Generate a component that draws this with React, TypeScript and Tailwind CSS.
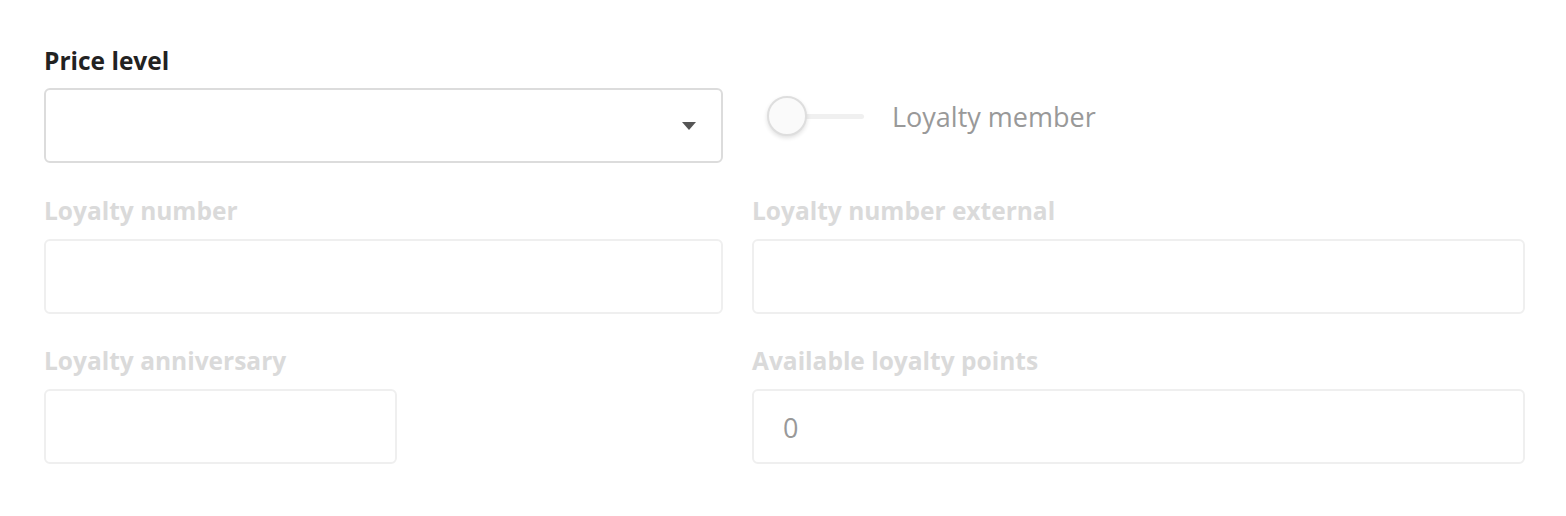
import { ReactNode } from "react";

const font = { fontFamily: "'Open Sans', 'Noto Sans', sans-serif" };

function Label({ children, disabled = false }: { children: ReactNode; disabled?: boolean }) {
  return (
    <div
      className={
        "text-[24.5px] leading-[32px] font-bold " + (disabled ? "text-[#dadada]" : "text-[#222]")
      }
    >
      {children}
    </div>
  );
}

function TextBox({ value, widthClass }: { value?: string; widthClass: string }) {
  return (
    <div
      className={
        "mt-[12px] h-[75px] rounded-[6px] border-2 border-[#efefef] bg-white flex items-center px-[29px] pt-[3px] text-[27px] text-[#999] " +
        widthClass
      }
    >
      {value}
    </div>
  );
}

export default function App() {
  return (
    <div className="w-[1566px] h-[516px] bg-white pl-[44px] pt-[45px]" style={font}>
      {/* row 1 */}
      <div className="flex">
        <div className="w-[679px]">
          <Label>Price level</Label>
          <div className="mt-[11px] h-[75px] rounded-[6px] border-2 border-[#dcdcdc] bg-white flex items-center justify-end pr-[25px]">
            <svg width="14" height="8" viewBox="0 0 14 8">
              <path d="M0 0 L14 0 L7 8 Z" fill="#555" />
            </svg>
          </div>
        </div>
        <div className="ml-[44px] mt-[51px] flex items-center h-[40px]">
          <div className="relative w-[97px] h-[40px] flex items-center">
            <div className="ml-[14px] h-[5px] w-[83px] rounded-full bg-[#f0f0f0]" />
            <div className="absolute left-0 top-0 w-[40px] h-[40px] rounded-full bg-[#fafafa] border-2 border-[#dedede] shadow-[0_2px_4px_rgba(0,0,0,0.12)]" />
          </div>
          <span className="ml-[28px] text-[27px] text-[#999] leading-none">Loyalty member</span>
        </div>
      </div>

      {/* row 2 */}
      <div className="flex mt-[32px]">
        <div className="w-[679px]">
          <Label disabled>Loyalty number</Label>
          <TextBox widthClass="w-[679px]" />
        </div>
        <div className="ml-[29px] w-[773px]">
          <Label disabled>Loyalty number external</Label>
          <TextBox widthClass="w-[773px]" />
        </div>
      </div>

      {/* row 3 */}
      <div className="flex mt-[31px]">
        <div className="w-[679px]">
          <Label disabled>Loyalty anniversary</Label>
          <TextBox widthClass="w-[353px]" />
        </div>
        <div className="ml-[29px] w-[773px]">
          <Label disabled>Available loyalty points</Label>
          <TextBox widthClass="w-[773px]" value="0" />
        </div>
      </div>
    </div>
  );
}
